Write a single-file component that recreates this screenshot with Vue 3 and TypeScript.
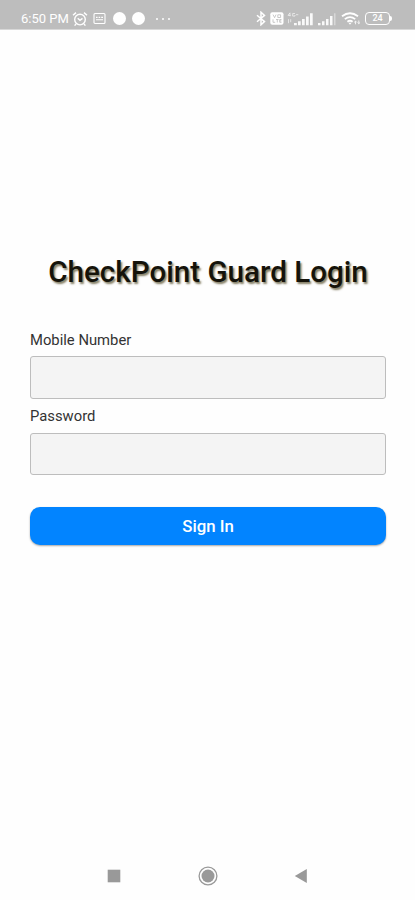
<script setup lang="ts">
import { ref } from 'vue'

const mobile = ref('')
const password = ref('')
</script>

<template>
  <div class="screen">
    <header class="status">
      <div class="group">
        <span class="time">6:50 PM</span>
        <svg class="alarm" width="16" height="16" viewBox="0 0 16 16" fill="none" stroke="#fff" stroke-width="1.4">
          <circle cx="8" cy="8.6" r="5.3" />
          <path d="M1 4.2 4 1.6M15 4.2 12 1.6M5.7 7.2 8 9.3l2.5-1.9M4 13l-1.4 1.6M12 13l1.4 1.6" />
        </svg>
        <svg class="note" width="13" height="13" viewBox="0 0 13 13" fill="none" stroke="#fff" stroke-width="1.1">
          <rect x="1" y="1.5" width="11" height="10" rx="1" />
          <path d="M3 5.4h1.6M5.6 5.4h1.6M8.2 5.4h1.8M3 7.7h7" />
        </svg>
        <span class="dot"></span>
        <span class="dot second"></span>
        <span class="more"><i></i><i></i><i></i></span>
      </div>
      <div class="group">
        <svg width="10" height="15" viewBox="0 0 10 15" fill="none" stroke="#fff" stroke-width="1.5">
          <path d="M1 4.2 8.5 10.6 5 13.8V1.2l3.5 3.2L1 10.8" />
        </svg>
        <svg class="volte" width="14" height="13" viewBox="0 0 14 13">
          <rect x="0.3" y="0.3" width="13.2" height="12.4" rx="2" fill="#fff" />
          <path d="M3 2.6 4.6 5.7 6 2.6M7.8 2.8h2.8v2.7H7.8zM3 7.3v3h2.2M6 7.5h2.6M7.3 7.5v3M11.5 7.5H9.7v2.8h1.8M9.7 8.9h1.6" fill="none" stroke="#bdbdbd" stroke-width=".8" />
        </svg>
        <svg class="signal-wide" width="27" height="14" viewBox="0 0 27 14" fill="#fff">
          <path d="M7 11h2.8v2.2H7zM11 9.2h2.7v4H11zM15 7h2.7v6.2H15zM19 4.5h2.7v8.7H19zM23 1.2h2.7v12H23z" opacity=".9" />
          <path d="M3 .8 1 3.4h2.6M3 .8v3.5M8 1.5H5.7v2.6H8V3M9 2.7h2.3M1.5 7.2v4M3.7 7.2v3" fill="none" stroke="#fff" stroke-width=".8" opacity=".75" />
        </svg>
        <svg class="signal" width="19" height="14" viewBox="0 0 19 14" fill="#fff">
          <path d="M0 11h2.5v2.2H0zM4 9.2h2.5v4H4zM8 7h2.5v6.2H8zM12 4h2.5v9.2H12z" opacity=".9" />
          <path d="M16 1.2h1.5v12H16z" opacity=".4" />
        </svg>
        <svg class="wifi" width="20" height="15" viewBox="0 0 20 15" fill="none" stroke="#fff" stroke-width="1.8">
          <path d="M1 5.3q8-6.2 16 0M3.8 8.1q5.2-4 10.4 0M6.4 10.7q2.6-1.9 5.2 0" />
          <path d="M7.4 11.7h3.2L9 13.7z" fill="#fff" stroke="none" />
          <path d="M14.5 13.3v-3M13.2 11.4l1.3-1.3 1.3 1.3M17.8 9.5v3M16.6 11.5l1.2 1.2 1.2-1.2" stroke-width=".8" />
        </svg>
        <span class="battery"><span class="cell">24</span><span class="tip"></span></span>
      </div>
    </header>

    <main class="content">
      <h1>CheckPoint Guard Login</h1>
      <form @submit.prevent>
        <label class="first" for="mobile">Mobile Number</label>
        <input id="mobile" v-model="mobile" type="tel" />
        <label for="password">Password</label>
        <input id="password" v-model="password" class="password" type="password" />
        <button type="submit">Sign In</button>
      </form>
    </main>

    <nav class="nav">
      <svg width="14" height="14" viewBox="0 0 14 14"><rect x=".7" y=".7" width="12.6" height="12.6" fill="#999" /></svg>
      <svg width="20" height="20" viewBox="0 0 20 20">
        <circle cx="10" cy="10" r="8.9" fill="none" stroke="#999" stroke-width="1.3" />
        <circle cx="10" cy="10" r="6.5" fill="#999" />
      </svg>
      <svg width="14" height="16" viewBox="0 0 14 16"><path d="M.8 8 12.8 1v14z" fill="#999" /></svg>
    </nav>
  </div>
</template>

<style>
body {
  background: #fefefe;
}
</style>

<style scoped>
.screen {
  box-sizing: border-box;
  width: 100%;
  height: 900px;
  display: flex;
  flex-direction: column;
  overflow: hidden;
  background: #fefefe;
  font-family: Roboto, sans-serif;
}
.status {
  box-sizing: border-box;
  flex: none;
  height: 30px;
  padding: 8px 23px 0 21px;
  display: flex;
  justify-content: space-between;
  background: #bdbdbd;
  border-bottom: 1px solid #d8d8d8;
}
.group {
  display: flex;
  align-items: center;
  height: 21px;
}
.time {
  width: 51px;
  color: #fff;
  font-size: 13px;
  line-height: 21px;
  white-space: nowrap;
}
.note {
  margin-left: 5px;
}
.dot {
  width: 13px;
  height: 13px;
  margin-left: 7px;
  border-radius: 50%;
  background: #fff;
}
.dot.second {
  margin-left: 6px;
}
.more {
  display: flex;
  gap: 4px;
  margin-left: 11px;
}
.more i {
  width: 2px;
  height: 2px;
  border-radius: 50%;
  background: #fff;
}
.volte {
  margin-left: 4px;
}
.signal-wide {
  margin-left: 3px;
}
.signal {
  margin-left: 4px;
}
.wifi {
  margin-left: 4px;
}
.battery {
  display: flex;
  align-items: center;
  margin-left: 4px;
}
.cell {
  box-sizing: border-box;
  width: 25px;
  height: 13px;
  border: 1.5px solid #fff;
  border-radius: 4px;
  color: #fff;
  font-size: 9px;
  font-weight: 500;
  line-height: 11px;
  text-align: center;
}
.tip {
  width: 2px;
  height: 5px;
  border-radius: 0 2px 2px 0;
  background: #fff;
}
.content {
  flex: 1;
  padding: 222px 29px 0 30px;
}
h1 {
  margin: 0;
  color: #15130a;
  font-size: 29.6px;
  font-weight: 500;
  line-height: 40px;
  text-align: center;
  white-space: nowrap;
  text-shadow: 1.5px 1.5px 2px rgba(100, 92, 60, 0.8);
}
form {
  display: flex;
  flex-direction: column;
  margin-top: 36px;
}
label {
  height: 28px;
  color: #333;
  font-size: 14.8px;
  line-height: 23px;
}
.first {
  line-height: 25px;
}
input {
  box-sizing: border-box;
  width: 100%;
  height: 43px;
  margin: 0 0 6px;
  padding: 0 10px;
  border: 1px solid #bdbdbd;
  border-radius: 3px;
  background: #f4f4f4;
  font: inherit;
  outline: none;
}
.password {
  height: 42px;
  margin-bottom: 0;
}
button {
  height: 38px;
  margin: 32px 0 0;
  padding: 0;
  border: 0;
  border-radius: 10px;
  background: #0284ff;
  box-shadow: 0 1px 2px rgba(0, 0, 0, 0.35);
  color: #fff;
  font: 500 16.8px/38px Roboto, sans-serif;
}
.nav {
  flex: none;
  height: 49px;
  padding: 0 107px 0 107px;
  display: flex;
  align-items: center;
  justify-content: space-between;
}
</style>
